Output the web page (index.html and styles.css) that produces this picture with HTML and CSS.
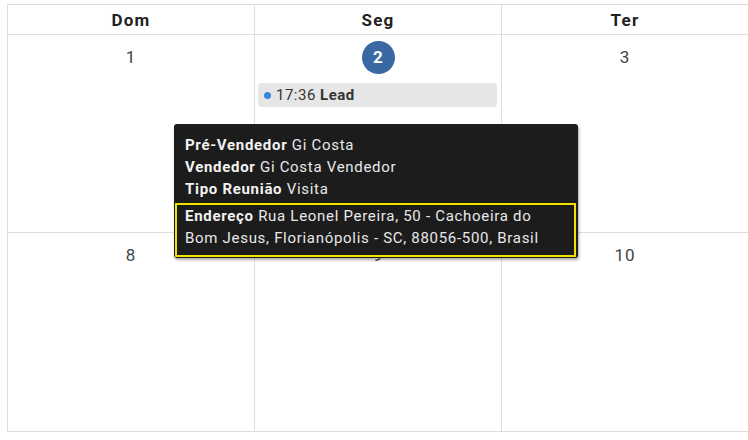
FILE: index.html
```html
<!DOCTYPE html>
<html lang="pt-BR">
<head>
<meta charset="utf-8">
<title>Calendário</title>
<link rel="stylesheet" href="styles.css">
</head>
<body>
<div class="calendar">
  <div class="grid">
    <div class="head">Dom</div>
    <div class="head">Seg</div>
    <div class="head">Ter</div>

    <div class="day"><div class="num">1</div></div>
    <div class="day">
      <div class="num"><span class="today">2</span></div>
      <div class="event"><span class="dot"></span><span class="title">17:36 <b>Lead</b></span></div>
    </div>
    <div class="day"><div class="num">3</div></div>

    <div class="day"><div class="num">8</div></div>
    <div class="day"><div class="num">9</div></div>
    <div class="day"><div class="num">10</div></div>
  </div>

  <div class="tooltip">
    <div class="line"><b>Pré-Vendedor</b> Gi Costa</div>
    <div class="line"><b>Vendedor</b> Gi Costa Vendedor</div>
    <div class="line"><b>Tipo Reunião</b> Visita</div>
    <div class="address"><b>Endereço</b> Rua Leonel Pereira, 50 - Cachoeira do Bom Jesus, Florianópolis - SC, 88056-500, Brasil</div>
  </div>
</div>
</body>
</html>
```

FILE: styles.css
```css
html, body {
  margin: 0;
  padding: 0;
  background: #ffffff;
  overflow: hidden;
}
body {
  width: 748px;
  height: 440px;
  font-family: Roboto, "Liberation Sans", sans-serif;
  color: #333;
}
.calendar {
  position: relative;
  width: 748px;
  height: 440px;
  padding: 4px 0 0 7px;
  box-sizing: border-box;
}
.grid {
  display: grid;
  grid-template-columns: 247px 247px 247px;
  grid-template-rows: 30px 198px 199px;
  width: 742px;
  border-top: 1px solid #dddddd;
  border-left: 1px solid #dddddd;
}
.head, .day {
  border-right: 1px solid #dddddd;
  border-bottom: 1px solid #dddddd;
}
.head {
  display: flex;
  align-items: center;
  justify-content: center;
  font-weight: 700;
  font-size: 17px;
  letter-spacing: 1.2px;
  color: #222;
}
.day {
  display: flex;
  flex-direction: column;
}
.num {
  display: flex;
  justify-content: center;
  align-items: center;
  height: 32px;
  margin-top: 6px;
  font-size: 17px;
  letter-spacing: 1px;
  color: #3f4447;
}
.today {
  width: 33px;
  height: 33px;
  border-radius: 50%;
  background: #3a68a2;
  color: #fff;
  font-weight: 700;
  display: flex;
  align-items: center;
  justify-content: center;
  font-size: 17px;
  letter-spacing: 0;
}
.event {
  margin: 10px 4px 0 3px;
  height: 24px;
  background: #e6e6e6;
  border-radius: 4px;
  display: flex;
  align-items: center;
  font-size: 15px;
  letter-spacing: 0.5px;
  color: #333;
}
.dot {
  width: 7px;
  height: 7px;
  border-radius: 50%;
  background: #3788d8;
  margin: 0 5px 0 6px;
}
.title {
  white-space: pre;
}
.event b {
  font-weight: 700;
}
.tooltip {
  position: absolute;
  left: 174px;
  top: 124px;
  width: 404px;
  height: 134px;
  box-sizing: border-box;
  background: #1c1c1c;
  border-radius: 3px;
  box-shadow: 1px 2px 3px rgba(0,0,0,0.35);
  padding: 10px 2px 1px 1px;
  color: #e8e8e8;
  font-size: 15px;
  letter-spacing: 0.7px;
  line-height: 22px;
}
.tooltip b {
  color: #f2f2f2;
  font-weight: 700;
}
.line {
  padding-left: 10px;
}
.address {
  margin-top: 3px;
  border: 2px solid #f2e200;
  padding: 0 8px 6px 8px;
}
```
